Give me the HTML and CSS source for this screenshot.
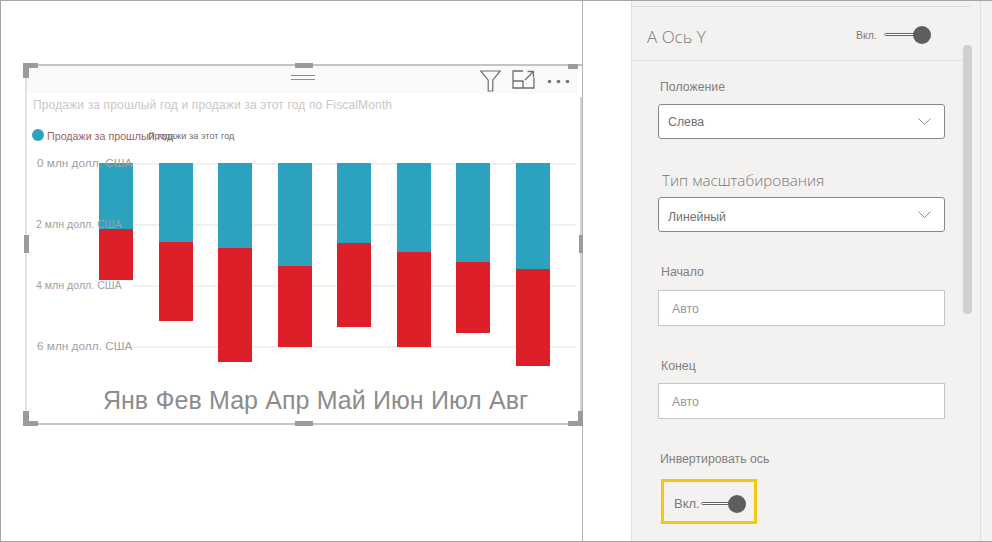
FILE: index.html
```html
<!DOCTYPE html>
<html lang="ru">
<head>
<meta charset="utf-8">
<title>Ось Y</title>
<link rel="stylesheet" href="styles.css">
</head>
<body>
<div class="page">
  <main class="canvas">
    <section class="visual">
      <span class="handle corner tl"></span>
      <span class="handle corner bl"></span>
      <span class="handle corner br"></span>
      <span class="handle tr"></span>
      <span class="handle mid-top"></span>
      <span class="handle mid-bottom"></span>
      <span class="handle mid-left"></span>
      <span class="handle mid-right"></span>
      <header class="visual-head">
        <div class="grip"></div>
        <div class="head-icons">
          <svg class="ico-funnel" width="21" height="22" viewBox="0 0 21 22" fill="none" stroke="#6f6f6f" stroke-width="1.2"><path d="M.8 1h19.400l-7.400 9.200V21H8.200V10.200z"/></svg>
          <svg class="ico-focus" width="23" height="19" viewBox="0 0 23 19" fill="none" stroke="#6f6f6f" stroke-width="1.3"><path d="M11 1H1v17h21V8"/><path d="M1 11h10v7"/><path d="M13 10l8-8M15.500 1.500h6v6"/></svg>
          <svg class="ico-more" width="23" height="5" viewBox="0 0 23 5" fill="#6f7680"><circle cx="2.500" cy="2.500" r="1.800"/><circle cx="11.500" cy="2.500" r="1.800"/><circle cx="20.500" cy="2.500" r="1.800"/></svg>
        </div>
      </header>
      <h2 class="chart-title">Продажи за прошлый год и продажи за этот год по FiscalMonth</h2>
      <div class="legend">
        <span class="dot"></span>
        <span class="legend-a">Продажи за прошлый год</span>
        <span class="legend-b">Продажи за этот год</span>
      </div>
      <div class="plot">
        <div class="gridline g0"></div>
        <div class="gridline g2"></div>
        <div class="gridline g4"></div>
        <div class="gridline g6"></div>
        <div class="bars">
          <div class="bar"><div class="blue" style="height:66px"></div><div class="red" style="height:51px"></div></div>
          <div class="bar"><div class="blue" style="height:79px"></div><div class="red" style="height:79px"></div></div>
          <div class="bar"><div class="blue" style="height:85px"></div><div class="red" style="height:114px"></div></div>
          <div class="bar"><div class="blue" style="height:103px"></div><div class="red" style="height:81px"></div></div>
          <div class="bar"><div class="blue" style="height:80px"></div><div class="red" style="height:84px"></div></div>
          <div class="bar"><div class="blue" style="height:89px"></div><div class="red" style="height:95px"></div></div>
          <div class="bar"><div class="blue" style="height:99px"></div><div class="red" style="height:71px"></div></div>
          <div class="bar"><div class="blue" style="height:106px"></div><div class="red" style="height:97px"></div></div>
        </div>
        <span class="tick t0">0 млн долл. США</span>
        <span class="tick t2">2 млн долл. США</span>
        <span class="tick t4">4 млн долл. США</span>
        <span class="tick t6">6 млн долл. США</span>
      </div>
      <div class="months">Янв Фев Мар Апр Май Июн Июл Авг</div>
    </section>
  </main>
  <div class="gutter"></div>
  <aside class="panel">
    <div class="panel-inner">
      <div class="card-head">
        <span class="card-title">А Ось Y</span>
        <div class="toggle toggle-small">
          <span class="toggle-label">Вкл.</span>
          <span class="track"></span>
          <span class="knob"></span>
        </div>
      </div>
      <div class="card-body">
        <div class="label l-pos">Положение</div>
        <div class="select"><span>Слева</span><svg width="13" height="7" viewBox="0 0 13 7" fill="none" stroke="#8f8f8f"><path d="M.5.5l6 6 6-6"/></svg></div>
        <div class="label-big">Тип масштабирования</div>
        <div class="select select-low"><span>Линейный</span><svg width="13" height="7" viewBox="0 0 13 7" fill="none" stroke="#8f8f8f"><path d="M.5.5l6 6 6-6"/></svg></div>
        <div class="label-mid l-start">Начало</div>
        <div class="input">Авто</div>
        <div class="label-mid l-end">Конец</div>
        <div class="input">Авто</div>
        <div class="label l-inv">Инвертировать ось</div>
        <div class="highlight">
          <div class="toggle toggle-big">
            <span class="toggle-label">Вкл.</span>
            <span class="track"></span>
            <span class="knob"></span>
          </div>
        </div>
      </div>
      <div class="scrollbar"></div>
    </div>
  </aside>
  <div class="edge"></div>
</div>
</body>
</html>
```
FILE: styles.css
```css
* { box-sizing: border-box; }
html, body { margin: 0; padding: 0; }
body { width: 992px; height: 542px; overflow: hidden; background: #fff; font-family: "Liberation Sans", Arial, sans-serif; }

.page { display: flex; width: 992px; height: 542px; border: 1px solid #a6a6a6; border-right: 0; background: #fff; }
.canvas { position: relative; flex: 0 0 582px; border-right: 1px solid #b4b4b4; }
.gutter { flex: 0 0 48px; }
.panel { flex: 0 0 350px; background: #f3f2f1; border-left: 1px solid #e1dfdd; border-right: 1px solid #e1dfdd; }
.edge { flex: 1; background: #f3f2f1; }

/* Report canvas: the visual sits freely on it */
.visual { position: absolute; left: 24px; top: 63px; width: 557px; height: 361px; border-top: 2px solid #c4c4c4; border-bottom: 2px solid #c4c4c4; border-left: 2px solid #e2e2e2; }
.visual::after { content: ""; position: absolute; right: 0; top: 31px; bottom: 0; width: 2px; background: #d4d4d4; }
.handle { position: absolute; background: #9b9b9b; z-index: 3; }
.corner { background: none; width: 15px; height: 15px; }
.corner.tl { left: -4px; top: -3px; border-left: 6px solid #9b9b9b; border-top: 5px solid #9b9b9b; }
.corner.bl { left: -4px; bottom: -3px; border-left: 6px solid #9b9b9b; border-bottom: 5px solid #9b9b9b; }
.corner.br { right: -1px; bottom: -3px; border-right: 5px solid #9b9b9b; border-bottom: 5px solid #9b9b9b; }
.tr { left: 541px; top: -2px; width: 10px; height: 5px; }
.mid-top { left: 268px; top: -3px; width: 18px; height: 5px; }
.mid-bottom { left: 268px; bottom: -3px; width: 18px; height: 5px; }
.mid-left { left: -3px; top: 169px; width: 5px; height: 18px; }
.mid-right { right: -1px; top: 169px; width: 4px; height: 18px; }

.visual-head { position: relative; display: flex; justify-content: flex-end; height: 28px; width: 551px; background: #fafafa; }
.grip { position: absolute; left: 264px; top: 9px; width: 24px; height: 5px; border-top: 1px solid #8c8c8c; border-bottom: 1px solid #8c8c8c; }
.head-icons { display: flex; align-items: flex-start; padding: 4px 8px 0 0; }
.ico-funnel { margin-right: 11.500px; }
.ico-focus { margin-right: 12px; }
.ico-more { margin-top: 9px; }

.chart-title { margin: 0; padding: 4px 0 0 6px; height: 25px; font-size: 12px; line-height: 15px; font-weight: 400; letter-spacing: 0.150px; color: #c8c8c8; white-space: nowrap; }
.legend { position: relative; height: 32px; }
.dot { position: absolute; left: 5px; top: 10px; width: 12px; height: 12px; border-radius: 50%; background: #2ca2bf; }
.legend-a { position: absolute; left: 20px; top: 10px; font-size: 10.700px; line-height: 14px; color: #a05f70; white-space: nowrap; }
.legend-b { position: absolute; left: 121px; top: 10px; font-size: 9.200px; line-height: 14px; color: #6e6e6e; white-space: nowrap; }

.plot { position: relative; height: 220px; }
.gridline { position: absolute; left: 106px; right: 6px; height: 2px; background: #f1f1f1; }
.g0 { top: 12px; } .g2 { top: 73px; } .g4 { top: 134px; } .g6 { top: 195px; }
.bars { position: absolute; left: 72px; top: 12px; width: 451px; display: flex; justify-content: space-between; align-items: flex-start; }
.bar { width: 34px; display: flex; flex-direction: column; }
.blue { background: #2ca2bf; }
.red { background: #dc1f28; }
.tick { position: absolute; left: 10px; font-size: 11.800px; line-height: 14px; color: #a0a0a0; white-space: nowrap; }
.t0 { top: 5px; } .t2 { top: 66px; left: 9px; font-size: 10.600px; } .t4 { top: 127px; left: 9px; font-size: 10.600px; } .t6 { top: 188px; }

.months { padding: 0 0 0 76px; font-size: 25px; line-height: 30px; color: #8c8c8c; white-space: nowrap; word-spacing: 0.400px; margin-top: 14px; }

/* Format pane */
.panel-inner { position: relative; height: 100%; padding-top: 5px; }
.panel-inner::before { content: ""; display: block; height: 1px; width: 340px; background: #e1dfdd; }
.card-head { display: flex; align-items: center; justify-content: space-between; height: 54px; width: 340px; padding: 0 41px 4px 15px; border-bottom: 1px solid #e1dfdd; }
.card-title { font-family: "Open Sans", "Liberation Sans", sans-serif; font-size: 17px; line-height: 22px; color: #7a7a7a; font-weight: 300; padding-top: 10px; }
.card-body { padding-left: 26px; }

.label { font-size: 12.300px; line-height: 15px; color: #808080; padding-left: 2px; }
.l-pos { margin-top: 19px; }
.label-big { margin: 31px 0 7px 4px; font-family: "Open Sans", "Liberation Sans", sans-serif; font-size: 15.200px; line-height: 20px; color: #777; font-weight: 300; }
.label-mid { font-size: 12.300px; line-height: 15px; color: #808080; padding-left: 3px; }
.l-start { margin-top: 33px; margin-bottom: 10px; }
.l-end { margin-top: 33px; margin-bottom: 9px; }
.l-inv { margin-top: 33px; margin-bottom: 12px; }

.select { display: flex; align-items: center; justify-content: space-between; width: 287px; height: 35px; margin-top: 9px; padding: 0 13px 0 9px; background: #fff; border: 1px solid #8a8886; border-radius: 3px; font-size: 12.300px; color: #707070; }
.label-big + .select { margin-top: 0; }
.select-low span { padding-top: 4px; }
.input { width: 287px; height: 36px; padding: 0 0 0 13px; background: #fff; border: 1px solid #c8c6c4; font-size: 12.300px; line-height: 36px; color: #999; }

.toggle { display: flex; align-items: center; }
.toggle-label { color: #7a7a7a; }
.track { height: 3px; border: 1px solid #666; background: #fff; border-radius: 2px; }
.knob { width: 18px; height: 18px; border-radius: 50%; background: #5f5e5c; }
.toggle-small { margin-top: 6px; }
.toggle-small .toggle-label { font-size: 10.500px; width: 28px; }
.toggle-small .track { width: 31px; margin-right: -2px; }
.toggle-big .toggle-label { font-size: 13px; width: 27px; }
.toggle-big .track { width: 29px; margin-right: -2px; }
.highlight { display: flex; align-items: center; width: 96px; height: 45px; margin-left: 3px; padding: 4px 0 0 10px; border: 3px solid #f2c811; }

.scrollbar { position: absolute; left: 331px; top: 44px; width: 9px; height: 269px; border-radius: 4px; background: #d2d0ce; }
```
